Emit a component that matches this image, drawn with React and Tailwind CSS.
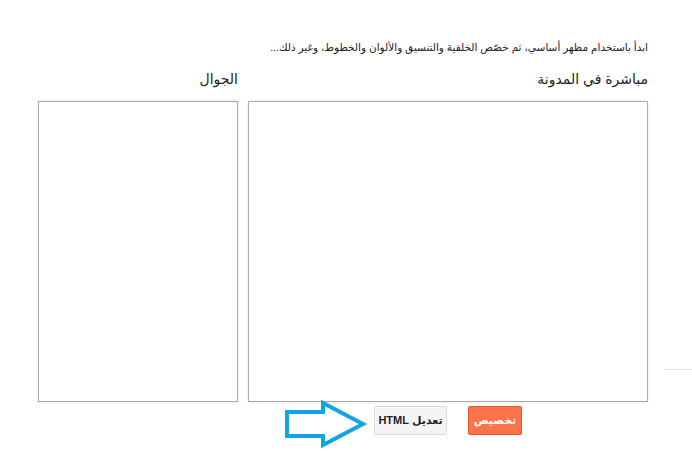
const arabic = { fontFamily: '"Liberation Sans", "DejaVu Sans", "Noto Sans", sans-serif' };

const Arrow = () => (
  <svg className="absolute left-[284px] top-[400px]" width="84" height="48" viewBox="0 0 84 48">
    <path
      d="M3 12 H39 V3 L79 24 L39 45 V36 H3 Z"
      fill="none"
      stroke="#12a3e3"
      strokeWidth="4"
      strokeLinejoin="miter"
    />
  </svg>
);

const App = () => {
  return (
    <div className="relative w-[692px] h-[467px] bg-white overflow-hidden" style={arabic}>
      <div dir="rtl" className="ml-[38px] w-[610px] pt-[39px]">
        <p className="text-[10.5px] leading-[16px] text-[#222]">
          ابدأ باستخدام مظهر أساسي، ثم خصّص الخلفية والتنسيق والألوان والخطوط، وغير ذلك...
        </p>
        <div className="flex gap-[10px] mt-[14px]">
          <div className="w-[400px]">
            <h3 className="text-[14px] leading-[20px] text-[#222] mb-[12px]">مباشرة في المدونة</h3>
            <div className="h-[301px] border border-[#aaa] shadow-[0_0_3px_rgba(0,0,0,0.12)] bg-white" />
            <div className="flex justify-center gap-[21px] mt-[4px]">
              <button className="w-[54px] h-[29px] bg-[#fa7349] border border-[#e0592d] rounded-[2px] text-white text-[11px] font-bold">
                تخصيص
              </button>
              <button className="w-[73px] h-[29px] bg-[#f5f5f5] border border-[#dcdcdc] rounded-[2px] text-[#222] text-[11px] font-bold">
                تعديل HTML
              </button>
            </div>
          </div>
          <div className="w-[200px]">
            <h3 className="text-[14px] leading-[20px] text-[#222] mb-[12px]">الجوال</h3>
            <div className="h-[301px] border border-[#aaa] shadow-[0_0_3px_rgba(0,0,0,0.12)] bg-white" />
          </div>
        </div>
      </div>
      <div className="absolute left-[664px] top-[369px] w-[28px] h-px bg-[#e5e5e5]" />
      <Arrow />
    </div>
  );
};

export default App;
